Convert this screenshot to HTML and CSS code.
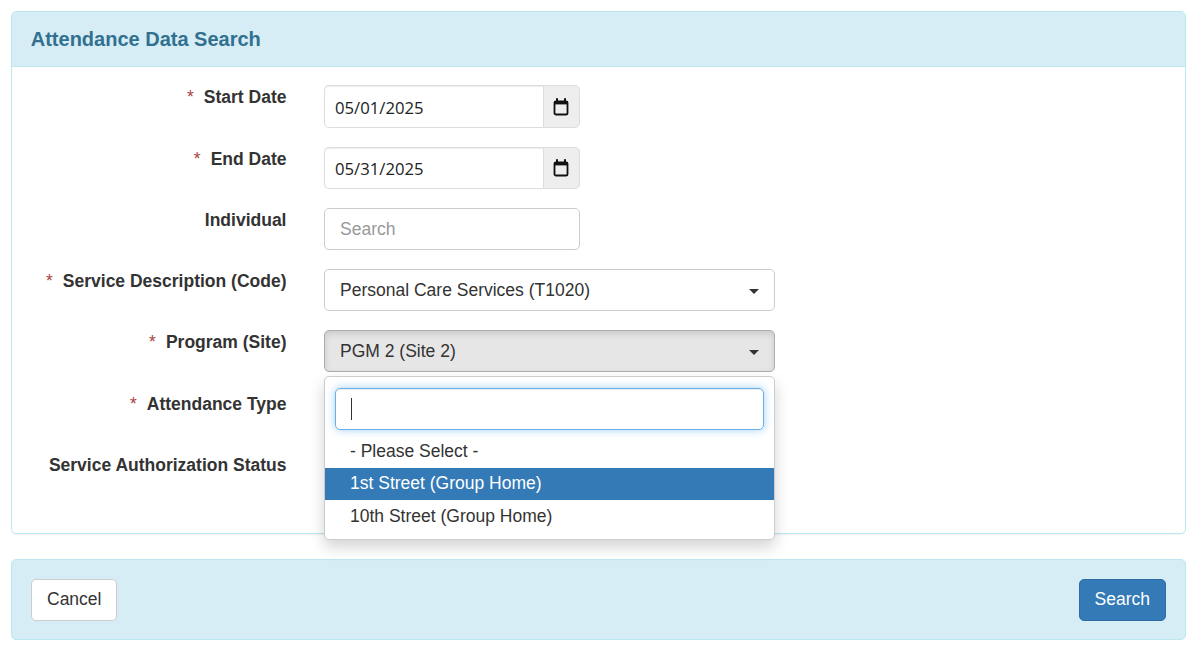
FILE: index.html
```html
<!DOCTYPE html>
<html lang="en">
<head>
<meta charset="utf-8">
<title>Attendance Data Search</title>
<link rel="stylesheet" href="styles.css">
</head>
<body>
<section class="panel">
  <h1 class="panel-heading">Attendance Data Search</h1>
  <form class="form-body">
    <div class="row">
      <label class="label"><span class="req">*</span>Start Date</label>
      <div class="field short date-group">
        <div class="date-input">05/01/2025</div>
        <div class="addon"><svg class="cal" viewBox="0 0 16 18"><path d="M4 1v3M12 1v3" stroke="#111" stroke-width="2" stroke-linecap="round" fill="none"/><rect x="1.5" y="3.5" width="13" height="13" rx="1.6" fill="none" stroke="#111" stroke-width="1.8"/><rect x="1" y="3" width="14" height="3.4" fill="#111"/></svg></div>
      </div>
    </div>
    <div class="row">
      <label class="label"><span class="req">*</span>End Date</label>
      <div class="field short date-group">
        <div class="date-input">05/31/2025</div>
        <div class="addon"><svg class="cal" viewBox="0 0 16 18"><path d="M4 1v3M12 1v3" stroke="#111" stroke-width="2" stroke-linecap="round" fill="none"/><rect x="1.5" y="3.5" width="13" height="13" rx="1.6" fill="none" stroke="#111" stroke-width="1.8"/><rect x="1" y="3" width="14" height="3.4" fill="#111"/></svg></div>
      </div>
    </div>
    <div class="row">
      <label class="label">Individual</label>
      <div class="field short"><div class="text-input placeholder">Search</div></div>
    </div>
    <div class="row">
      <label class="label"><span class="req">*</span>Service Description (Code)</label>
      <div class="field wide"><div class="select">Personal Care Services (T1020)<span class="caret"></span></div></div>
    </div>
    <div class="row">
      <label class="label"><span class="req">*</span>Program (Site)</label>
      <div class="field wide dropdown">
        <div class="select open">PGM 2 (Site 2)<span class="caret"></span></div>
        <div class="menu">
          <div class="menu-search"><div class="search-box"><span class="cursor"></span></div></div>
          <ul class="options">
            <li class="option">- Please Select -</li>
            <li class="option active">1st Street (Group Home)</li>
            <li class="option">10th Street (Group Home)</li>
          </ul>
        </div>
      </div>
    </div>
    <div class="row">
      <label class="label"><span class="req">*</span>Attendance Type</label>
      <div class="field wide"><div class="select"></div></div>
    </div>
    <div class="row">
      <label class="label">Service Authorization Status</label>
      <div class="field wide"><div class="select"></div></div>
    </div>
  </form>
</section>
<footer class="actions">
  <button class="btn" type="button">Cancel</button>
  <button class="btn primary" type="button">Search</button>
</footer>
</body>
</html>
```
FILE: styles.css
```css
* { box-sizing: border-box; }
html, body { height: 100%; }
body {
  margin: 0;
  padding: 11px 15px 0 11px;
  background: #fff;
  color: #333;
  font: 17.5px/25px "Liberation Sans", Arial, sans-serif;
  overflow: hidden;
}
.panel {
  border: 1px solid #bce8f1;
  border-radius: 5px;
  box-shadow: 0 1px 1px rgba(0,0,0,.05);
  height: 523px;
}
.panel-heading {
  margin: 0;
  height: 55px;
  padding: 15px 18.75px 0;
  background: #d6edf5;
  border-bottom: 1px solid #bce8f1;
  border-radius: 4px 4px 0 0;
  color: #31708f;
  font-size: 20px;
  line-height: 24px;
  font-weight: 700;
}
.form-body { padding-top: 18.25px; }
.row {
  display: grid;
  grid-template-columns: repeat(12, 1fr);
  margin-bottom: 18.75px;
  min-height: 42.5px;
}
.label {
  grid-column: span 3;
  padding: 0 18.75px 0 0;
  text-align: right;
  font-weight: 700;
}
.req { color: #a94442; margin-right: 10px; font-weight: 400; }
.field { padding: 0 18.75px; }
.short { grid-column: span 3; }
.wide { grid-column: span 5; }
.dropdown { position: relative; }
.date-group { display: flex; }
.date-input {
  flex: 1;
  height: 42.5px;
  padding: 8.75px 10px;
  border: 1px solid #ddd;
  border-right: 0;
  border-radius: 5px 0 0 5px;
  box-shadow: inset 0 1px 1px rgba(0,0,0,.075);
  color: #222;
  font-family: "Open Sans", sans-serif;
  font-size: 16.7px;
}
.addon {
  width: 37px;
  height: 42.5px;
  display: flex;
  align-items: center;
  justify-content: center;
  background: #eee;
  border: 1px solid #ddd;
  border-radius: 0 5px 5px 0;
}
.cal { width: 16px; height: 18px; display: block; }
.text-input, .select {
  height: 42px;
  padding: 8px 15px;
  border: 1px solid #ccc;
  border-radius: 5px;
  background: #fff;
}
.placeholder { color: #999; }
.select { position: relative; }
.select.open {
  background: #e6e6e6;
  border-color: #adadad;
  box-shadow: inset 0 3px 6px rgba(0,0,0,.125);
}
.caret {
  position: absolute;
  right: 15px;
  top: 19px;
  border-top: 5px solid #333;
  border-left: 5px solid transparent;
  border-right: 5px solid transparent;
}
.menu {
  position: absolute;
  z-index: 5;
  left: 18.75px;
  right: 18.75px;
  top: 45.5px;
  background: #fff;
  border: 1px solid #ccc;
  border-radius: 5px;
  box-shadow: 0 7px 15px rgba(0,0,0,.175);
}
.menu-search { padding: 11px 10px 5px; }
.search-box {
  height: 42.5px;
  padding: 9px 15px;
  border: 1px solid #66afe9;
  border-radius: 5px;
  box-shadow: inset 0 1px 1px rgba(0,0,0,.075), 0 0 8px rgba(102,175,233,.6);
}
.cursor { display: block; width: 1px; height: 22px; background: #333; }
.options { list-style: none; margin: 0 0 6px; padding: 0; }
.option { height: 32.5px; padding: 3.5px 25px; }
.option.active { background: #337ab7; color: #fff; }
.actions {
  display: flex;
  justify-content: space-between;
  margin-top: 25px;
  height: 81px;
  padding: 19px 19px;
  background: #d6edf5;
  border: 1px solid #bce8f1;
  border-radius: 5px;
}
.btn {
  height: 42px;
  padding: 0 15px 1px;
  background: #fff;
  border: 1px solid #ccc;
  border-radius: 5px;
  color: #333;
  font: inherit;
}
.primary { background: #337ab7; border-color: #2e6da4; color: #fff; }
```
